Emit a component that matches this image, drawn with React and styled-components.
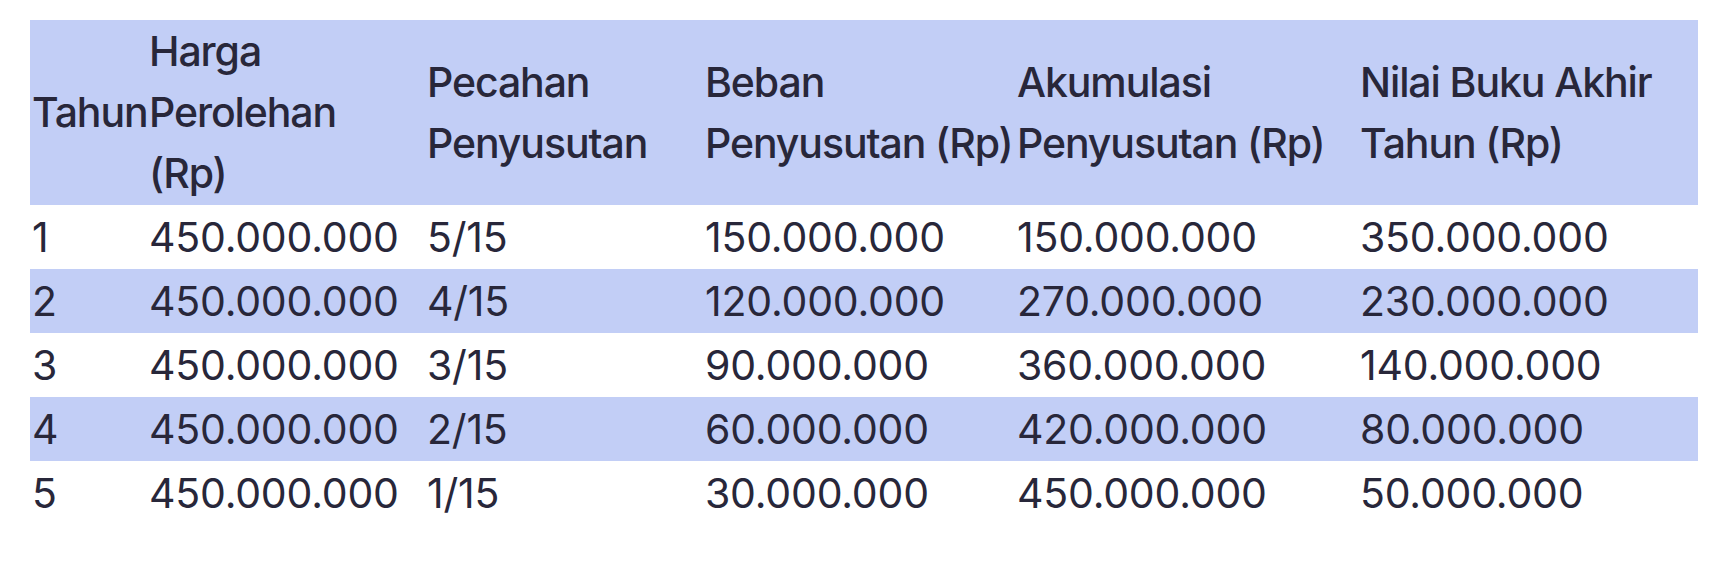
import React from 'react';
import styled, { createGlobalStyle } from 'styled-components';

const GlobalStyle = createGlobalStyle`
   body {
      margin: 0;
      background: #ffffff;
      font-family: Inter, "Noto Sans", sans-serif;
      color: #28273a;
   }
`

const Page = styled.div`
   padding: 20px 16px 0 30px;
`

const Table = styled.table`
   width: 100%;
   border-collapse: collapse;
   table-layout: fixed;
   font-size: 41px;
   line-height: 61px;
`

const HeadCell = styled.th`
   text-align: left;
   font-weight: 500;
   vertical-align: middle;
   padding: 1px 2px;
   letter-spacing: -1.1px;
   white-space: nowrap;
`

const Row = styled.tr`
   background-color: ${props => props.shaded ? '#c2cef6' : '#ffffff'};
`

const Cell = styled.td`
   padding: 1.5px 2px;
   font-weight: 400;
   white-space: nowrap;
   letter-spacing: -0.2px;
`

const columns = [117, 278, 278, 312, 343, 340];

const headers = [
   ['Tahun'],
   ['Harga', 'Perolehan', '(Rp)'],
   ['Pecahan', 'Penyusutan'],
   ['Beban', 'Penyusutan (Rp)'],
   ['Akumulasi', 'Penyusutan (Rp)'],
   ['Nilai Buku Akhir', 'Tahun (Rp)'],
];

const rows = [
   ['1', '450.000.000', '5/15', '150.000.000', '150.000.000', '350.000.000'],
   ['2', '450.000.000', '4/15', '120.000.000', '270.000.000', '230.000.000'],
   ['3', '450.000.000', '3/15', '90.000.000', '360.000.000', '140.000.000'],
   ['4', '450.000.000', '2/15', '60.000.000', '420.000.000', '80.000.000'],
   ['5', '450.000.000', '1/15', '30.000.000', '450.000.000', '50.000.000'],
];

const App = () => {
   return (
      <>
         <GlobalStyle />
         <Page>
            <Table>
               <colgroup>
                  {columns.map((w, i) => <col key={i} style={{ width: w }} />)}
               </colgroup>
               <thead>
                  <Row shaded>
                     {headers.map((lines, i) => (
                        <HeadCell key={i}>
                           {lines.map((l, j) => <div key={j}>{l}</div>)}
                        </HeadCell>
                     ))}
                  </Row>
               </thead>
               <tbody>
                  {rows.map((r, i) => (
                     <Row key={i} shaded={i % 2 === 1}>
                        {r.map((c, j) => <Cell key={j}>{c}</Cell>)}
                     </Row>
                  ))}
               </tbody>
            </Table>
         </Page>
      </>
   )
}

export default App
